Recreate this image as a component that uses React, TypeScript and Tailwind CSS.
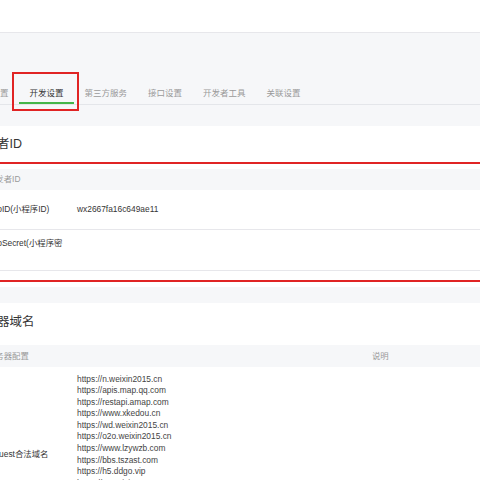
const tabs = ['基本设置', '开发设置', '第三方服务', '接口设置', '开发者工具', '关联设置'];

const urls = [
  'https://n.weixin2015.cn',
  'https://apis.map.qq.com',
  'https://restapi.amap.com',
  'https://www.xkedou.cn',
  'https://wd.weixin2015.cn',
  'https://o2o.weixin2015.cn',
  'https://www.lzywzb.com',
  'https://bbs.tszast.com',
  'https://h5.ddgo.vip',
  'https://m.weixin2015.cn',
  'https://api.weixin2015.cn',
  'https://img.weixin2015.cn',
  'https://res.wx.qq.com',
  'https://www.ddgo.vip',
];

const App = () => {
  return (
    <div
      className="relative w-[480px] h-[480px] overflow-hidden bg-[#f6f7f9] text-[8.4px] text-[#353535]"
      style={{ fontFamily: '"Liberation Sans", "Noto Sans CJK SC", sans-serif' }}
    >
      {/* top bar */}
      <div className="h-[33px] bg-white border-b border-[#e7e7eb]" />

      {/* tabs */}
      <div className="mt-[54px] -ml-[36px] w-[560px] flex border-b border-[#e4e6ea]">
        {tabs.map((t) => (
          <div
            key={t}
            className={`px-[10.5px] pb-[3px] leading-[12px] text-[8.5px] border-b-2 ${
              t === '开发设置' ? 'border-[#44b549] text-[#353535]' : 'border-transparent text-[#9a9a9a]'
            }`}
          >
            {t}
          </div>
        ))}
      </div>

      {/* card: 开发者ID */}
      <div className="mt-[21px] -ml-[48px] w-[580px] bg-white px-[20px] pb-[16px]">
        <div className="pt-[9px] pb-[16px] leading-[18px] text-[12.5px] text-[#353535]">开发者ID</div>
        <div className="h-[21px] bg-[#f6f7f9] flex items-center pl-[15px] text-[#9a9a9a]">开发者ID</div>
        <div className="h-[40px] border-b border-[#e7e7eb] flex items-center">
          <div className="w-[105px] pl-[15px] shrink-0">AppID(小程序ID)</div>
          <div className="text-[#353535]">wx2667fa16c649ae11</div>
        </div>
        <div className="h-[41px] border-b border-[#e7e7eb] flex items-center">
          <div className="w-[105px] pl-[15px] shrink-0 leading-[13px]">
            AppSecret(小程序密
            <br />
            钥)
          </div>
          <div />
        </div>
      </div>

      {/* card: 服务器域名 */}
      <div className="mt-[16px] -ml-[48px] w-[580px] bg-white px-[20px] pb-[16px]">
        <div className="pt-[10px] pb-[14px] leading-[18px] text-[12.5px] text-[#353535]">服务器域名</div>
        <div className="h-[22px] bg-[#f6f7f9] flex items-center text-[#9a9a9a]">
          <div className="w-[400px] pl-[15px] shrink-0">服务器配置</div>
          <div>说明</div>
        </div>
        <div className="flex items-center py-[6.5px] border-b border-[#e7e7eb]">
          <div className="w-[105px] pl-[15px] shrink-0">request合法域名</div>
          <div className="flex flex-col leading-[11.6px] text-[#444444]">
            {urls.map((u) => (
              <span key={u}>{u}</span>
            ))}
          </div>
        </div>
      </div>

      {/* annotations */}
      <div className="absolute left-[12px] top-[72px] w-[67px] h-[39px] border-2 border-[#e02424]" />
      <div className="absolute left-0 top-[162px] w-[480px] h-[2px] bg-[#e02424]" />
      <div className="absolute left-0 top-[280px] w-[480px] h-[2px] bg-[#e02424]" />
    </div>
  );
};

export default App;
